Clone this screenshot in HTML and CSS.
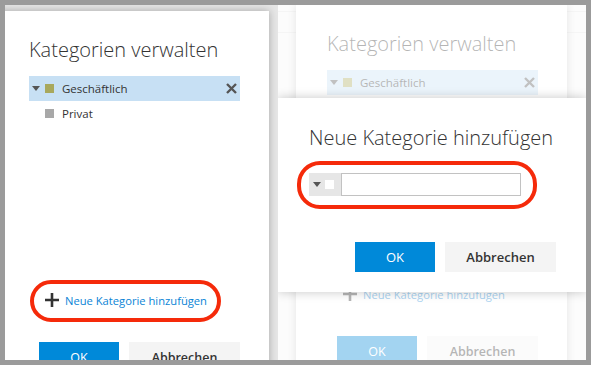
FILE: index.html
```html
<!DOCTYPE html>
<html lang="de">
<head>
  <meta charset="UTF-8">
  <title>Kategorien verwalten</title>
  <link rel="stylesheet" href="styles.css">
</head>
<body>
  <div class="frame">
    <div class="screen">

      <!-- Linker Ausschnitt: Kategorien verwalten -->
      <div class="pane pane-left">
        <div class="dialog manage">
          <h2 class="title">Kategorien verwalten</h2>
          <ul class="cat-list">
            <li class="cat selected">
              <span class="caret"></span>
              <span class="swatch olive"></span>
              <span class="cat-name">Geschäftlich</span>
              <svg class="remove" width="11" height="11" viewBox="0 0 11 11"><path d="M1 1L10 10M10 1L1 10" stroke="#555" stroke-width="2.4"/></svg>
            </li>
            <li class="cat">
              <span class="swatch grey"></span>
              <span class="cat-name">Privat</span>
            </li>
          </ul>
          <div class="add-link marked">
            <svg width="14" height="14" viewBox="0 0 14 14"><path d="M7 0V14M0 7H14" stroke="#333" stroke-width="2.6"/></svg>
            <span>Neue Kategorie hinzufügen</span>
          </div>
          <div class="actions">
            <button class="btn primary">OK</button>
            <button class="btn">Abbrechen</button>
          </div>
        </div>
      </div>

      <!-- Rechter Ausschnitt: Neue Kategorie hinzufügen -->
      <div class="pane pane-right">
        <div class="dialog manage behind">
          <h2 class="title">Kategorien verwalten</h2>
          <ul class="cat-list">
            <li class="cat selected">
              <span class="caret"></span>
              <span class="swatch olive"></span>
              <span class="cat-name">Geschäftlich</span>
              <svg class="remove" width="11" height="11" viewBox="0 0 11 11"><path d="M1 1L10 10M10 1L1 10" stroke="#555" stroke-width="2.4"/></svg>
            </li>
            <li class="cat">
              <span class="swatch grey"></span>
              <span class="cat-name">Privat</span>
            </li>
          </ul>
          <div class="add-link">
            <svg width="14" height="14" viewBox="0 0 14 14"><path d="M7 0V14M0 7H14" stroke="#333" stroke-width="2.6"/></svg>
            <span>Neue Kategorie hinzufügen</span>
          </div>
          <div class="actions">
            <button class="btn primary">OK</button>
            <button class="btn">Abbrechen</button>
          </div>
        </div>
        <div class="veil"></div>
        <div class="dialog add">
          <h2 class="title">Neue Kategorie hinzufügen</h2>
          <div class="new-row marked">
            <div class="picker">
              <span class="caret"></span>
              <span class="swatch white"></span>
            </div>
            <input class="name-input" type="text">
          </div>
          <div class="actions">
            <button class="btn primary">OK</button>
            <button class="btn">Abbrechen</button>
          </div>
        </div>
      </div>

    </div>
  </div>
</body>
</html>
```

FILE: styles.css
```css
body {
  margin: 0;
  font-family: "Open Sans", "Noto Sans", sans-serif;
  color: #333;
}

/* Grauer Rahmen um den Screenshot */
.frame {
  width: 591px;
  height: 365px;
  box-sizing: border-box;
  padding: 5px;
  background: #9b9b9b;
}

.screen {
  display: flex;
  height: 355px;
  overflow: hidden;
}

.pane {
  position: relative;
  overflow: hidden;
  flex: none;
}

.pane-left {
  width: 273px;
  background: #e6e6e6;
}

.pane-right {
  width: 308px;
  background:
    linear-gradient(#e4e4e4, #e4e4e4) 0 6px / 100% 1px no-repeat,
    linear-gradient(#e4e4e4, #e4e4e4) 0 27px / 100% 1px no-repeat,
    #f6f6f6;
}

/* Dialoge */
.dialog {
  background: #fff;
  box-sizing: border-box;
}

.manage {
  width: 271px;
  height: 400px;
  padding: 25px 29px 0 31px;
  box-shadow: 0 0 8px rgba(0, 0, 0, 0.28);
}

.pane-left .manage {
  margin: 6px 0 0 -7px;
}

.pane-right .manage {
  margin: 0 0 0 18px;
}

.title {
  margin: 0;
  font-size: 20px;
  line-height: 27px;
  font-weight: 300;
  color: #333;
  white-space: nowrap;
}

.cat-list {
  list-style: none;
  margin: 13px 0 0;
  padding: 0;
  height: 213px;
}

.cat {
  display: flex;
  align-items: center;
  height: 25px;
  padding: 0 3px 0 16px;
  font-size: 11.5px;
}

.cat.selected {
  padding-left: 3px;
  background: #c7e0f4;
}

.caret {
  width: 0;
  height: 0;
  border-left: 4px solid transparent;
  border-right: 4px solid transparent;
  border-top: 5px solid #555;
  margin-right: 5px;
}

.swatch {
  width: 9px;
  height: 9px;
  flex: none;
}

.swatch.olive { background: #a8a85c; }
.swatch.grey { background: #a8a8a8; }
.swatch.white { background: #fff; }

.cat-name {
  margin-left: 8px;
  flex: 1;
}

.add-link {
  position: relative;
  display: flex;
  align-items: center;
  gap: 6px;
  height: 22px;
  padding-left: 16px;
  font-size: 11.2px;
  color: #0a84d6;
}

.actions {
  display: flex;
  gap: 10px;
  margin-top: 31px;
  padding-left: 10px;
}

.btn {
  height: 30px;
  border: none;
  padding: 0;
  font-family: inherit;
  font-size: 12.5px;
  font-weight: 600;
  color: #333;
  background: #f4f4f4;
  width: 111px;
}

.btn.primary {
  width: 80px;
  font-weight: 400;
  color: #fff;
  background: #0089d9;
}

/* Roter Markierungsring */
.marked::after {
  content: "";
  position: absolute;
  border: 4px solid #f52a0a;
  box-sizing: border-box;
}

.add-link.marked::after {
  left: 1px;
  top: -9px;
  width: 191px;
  height: 42px;
  border-radius: 21px;
}

/* Abgeblendeter Hintergrund */
.veil {
  position: absolute;
  inset: 0;
  background: rgba(255, 255, 255, 0.64);
}

.add {
  position: absolute;
  left: 0;
  top: 93px;
  width: 308px;
  height: 194px;
  padding: 26px 0 0 31px;
  box-shadow: 0 0 10px rgba(0, 0, 0, 0.22);
}

.new-row {
  position: relative;
  display: flex;
  height: 23px;
  margin-top: 22px;
}

.new-row.marked::after {
  left: -12px;
  top: -12px;
  width: 240px;
  height: 48px;
  border-radius: 23px;
}

.picker {
  display: flex;
  align-items: center;
  width: 32px;
  padding-left: 4px;
  box-sizing: border-box;
  background: #e6e6e6;
}

.picker .caret {
  margin-right: 4px;
}

.name-input {
  width: 180px;
  height: 23px;
  box-sizing: border-box;
  margin: 0;
  border: 1px solid #c2c2c2;
  padding: 0 4px;
  font-family: inherit;
}

.add .actions {
  margin-top: 46px;
  padding-left: 46px;
}

.add .btn {
  font-size: 13px;
}
```
